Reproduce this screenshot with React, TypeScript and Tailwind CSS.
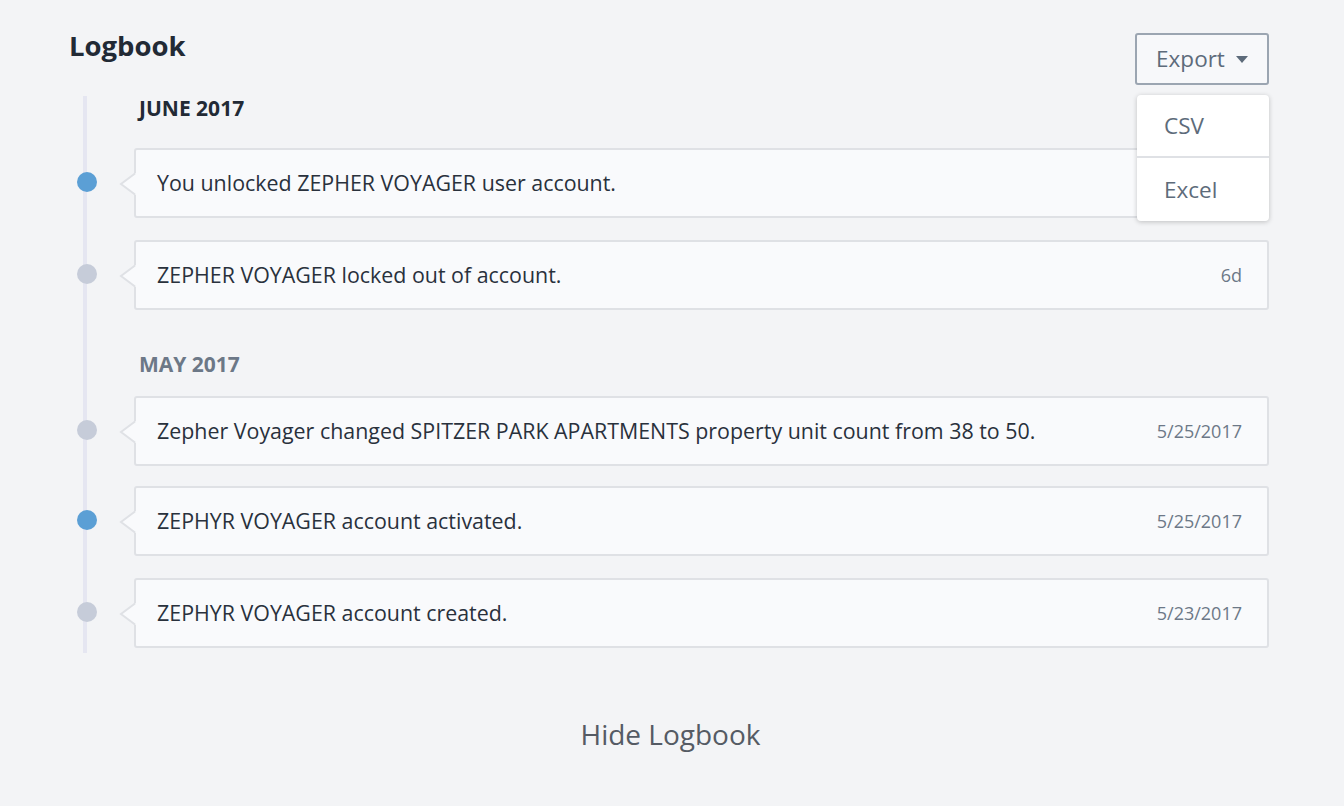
import React from "react";

type Entry = { text: string; date: string; active?: boolean };

const june: Entry[] = [
  { text: "You unlocked ZEPHER VOYAGER user account.", date: "", active: true },
  { text: "ZEPHER VOYAGER locked out of account.", date: "6d" },
];
const may: Entry[] = [
  { text: "Zepher Voyager changed SPITZER PARK APARTMENTS property unit count from 38 to 50.", date: "5/25/2017" },
  { text: "ZEPHYR VOYAGER account activated.", date: "5/25/2017", active: true },
  { text: "ZEPHYR VOYAGER account created.", date: "5/23/2017" },
];

function Row({ e }: { e: Entry }) {
  return (
    <div className="relative flex items-center h-[70px]">
      <div
        className={`absolute left-[-10px] top-[24px] w-[20px] h-[20px] rounded-full ${
          e.active ? "bg-[#5b9fd5]" : "bg-[#c6ccd9]"
        }`}
      />
      <div className="relative ml-[47px] flex-1 h-[70px] flex items-center justify-between bg-[#f9fafc] border-2 border-[#dfe1e5] rounded-[3px] pl-[21px] pr-[25px]">
        <svg
          className="absolute left-[-17px] top-[22px]"
          width="18"
          height="24"
          viewBox="0 0 18 24"
        >
          <polygon points="17,1 2,12 17,23" fill="#f9fafc" />
          <polyline points="16,1.5 2,12 16,22.5" fill="none" stroke="#dfe1e5" strokeWidth="2" />
        </svg>
        <span className="text-[21.4px] text-[#29313c]">{e.text}</span>
        <span className="text-[18px] text-[#6c7887]">{e.date}</span>
      </div>
    </div>
  );
}

export default function App() {
  return (
    <div
      className="h-[806px] w-full bg-[#f3f4f6] pl-[70px] pr-[75px] relative"
      style={{ fontFamily: "'Open Sans', sans-serif" }}
    >
      <div className="flex justify-between items-start pt-[28px]">
        <h1 className="text-[27.5px] font-bold text-[#222a35] leading-[36px] ml-[-1px]">Logbook</h1>
        <div className="relative mt-[5px]">
          <button className="h-[52px] w-[134px] flex items-center justify-center gap-[11px] bg-[#f7f8fa] border-2 border-[#9ba5b1] rounded-[3px] text-[22.5px] text-[#5d6b7a]">
            <span>Export</span>
            <svg width="12" height="7" viewBox="0 0 12 7" className="mt-[1px]">
              <polygon points="0,0 12,0 6,7" fill="#5d6b7a" />
            </svg>
          </button>
          <div className="absolute right-0 top-[62px] w-[132px] bg-white rounded-[4px] shadow-[0_1px_5px_rgba(0,0,0,0.22)] z-10">
            <div className="h-[63px] flex items-center pl-[27px] text-[22.5px] text-[#5d6b7a] border-b-2 border-[#dfe1e5]">CSV</div>
            <div className="h-[63px] flex items-center pl-[27px] text-[22.5px] text-[#5d6b7a]">Excel</div>
          </div>
        </div>
      </div>

      <div className="ml-[13px] mt-[11px] border-l-4 border-[#e5e6f1] pb-[5px]">
        <div className="pl-[52px] h-[52px] text-[21px] font-bold text-[#222a35] leading-[24px]">JUNE 2017</div>
        <div className="flex flex-col gap-[22px]">
          {june.map((e, i) => (
            <Row key={i} e={e} />
          ))}
        </div>
        <div className="pl-[52px] pt-[42px] h-[86px] text-[21px] font-bold text-[#6c7887] leading-[24px]">MAY 2017</div>
        <div className="flex flex-col">
          <Row e={may[0]} />
          <div className="h-[20px]" />
          <Row e={may[1]} />
          <div className="h-[22px]" />
          <Row e={may[2]} />
        </div>
      </div>

      <div className="flex justify-center mt-[60px]">
        <span className="text-[28px] text-[#555b64] ml-[2px]">Hide Logbook</span>
      </div>
    </div>
  );
}
